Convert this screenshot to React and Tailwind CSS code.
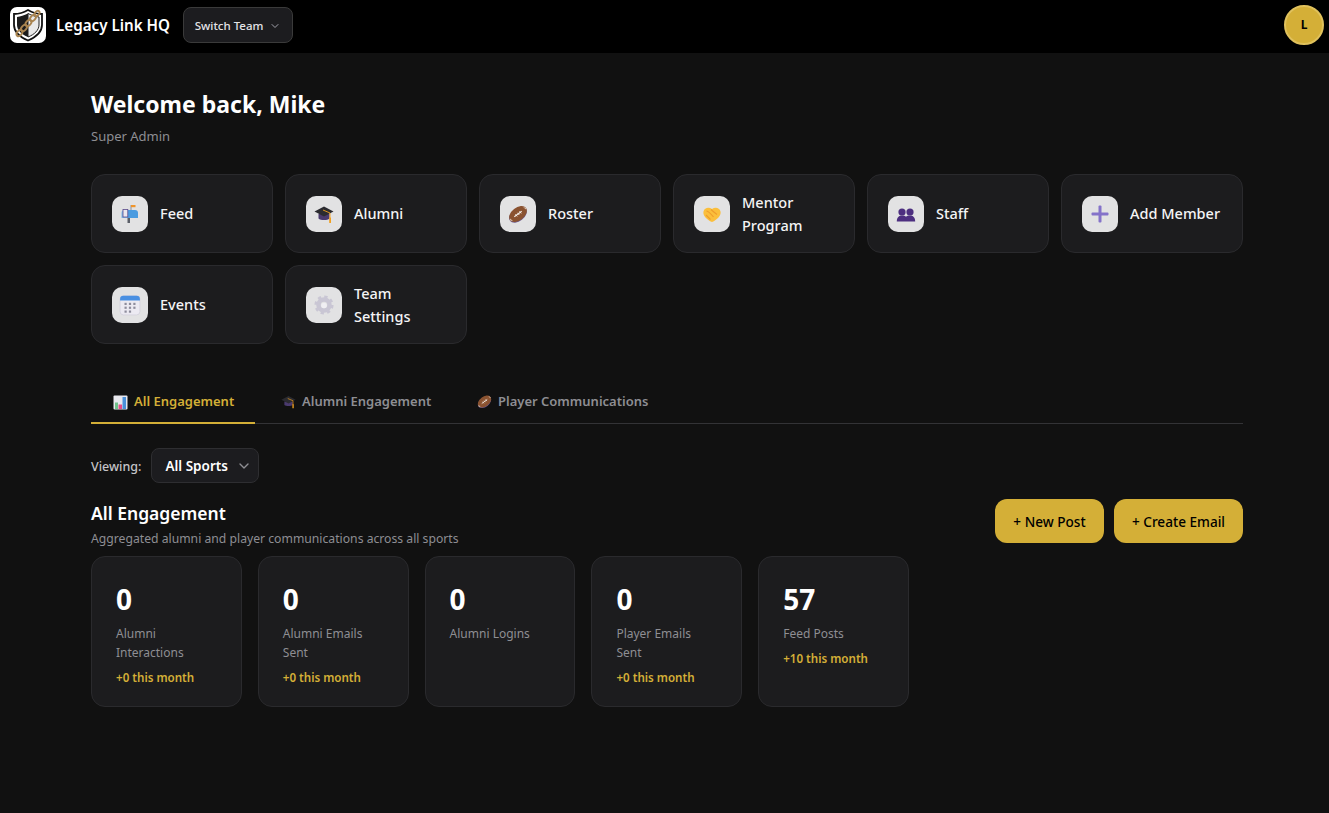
import React from 'react';
import { ChevronDown } from 'lucide-react';

const LogoMark = () => (
    <svg viewBox="0 0 36 36" className="w-9 h-9 shrink-0">
        <rect width="36" height="36" rx="7" fill="#fff" />
        <path d="M18 3 C13 6 8 7 4 7 L4 18 C4 25 10 30 18 33.500 C26 30 32 25 32 18 L32 7 C28 7 23 6 18 3 Z" fill="#fff" stroke="#111" strokeWidth="1.800" />
        <path d="M18 6.500 C14 8.500 10.500 9.500 7 10 L7 18 C7 23 11.500 27.500 18 30 Z" fill="#1c1c1c" />
        <path d="M18 6.500 C22 8.500 25.500 9.500 29 10 L29 18 C29 23 24.500 27.500 18 30 Z" fill="#e9e9e9" stroke="#222" strokeWidth="1" />
        <g fill="none" stroke="#a98450" strokeWidth="1.900">
            <ellipse cx="9.500" cy="26" rx="3.600" ry="2.300" transform="rotate(-48 9.500 26)" />
            <ellipse cx="14" cy="21" rx="3.600" ry="2.300" transform="rotate(-48 14 21)" />
            <ellipse cx="18.500" cy="16" rx="3.600" ry="2.300" transform="rotate(-48 18.500 16)" />
            <ellipse cx="23" cy="11" rx="3.600" ry="2.300" transform="rotate(-48 23 11)" />
            <ellipse cx="27" cy="6.500" rx="3" ry="2" transform="rotate(-48 27 6.500)" />
        </g>
    </svg>
);

const MailboxIcon = () => (
    <svg viewBox="0 0 20 20" className="w-5 h-5">
        <rect x="10.500" y="1" width="1" height="6" fill="#8a8f9c" />
        <rect x="11" y="1" width="4.500" height="2.200" fill="#f0952b" />
        <path d="M4 6 h11 a3 3 0 0 1 3 3 v5 h-14 z" fill="#4a9be0" />
        <path d="M1.500 9 a3 3 0 0 1 6 0 v5 h-6 z" fill="#7cb8ea" />
        <rect x="3" y="5.500" width="4.800" height="7.500" fill="#e9e6ef" stroke="#5a4a8a" strokeWidth="0.800" />
        <rect x="7.500" y="14" width="2.500" height="5" fill="#5b5f68" />
    </svg>
);

const CapIcon = ({ className = 'w-5 h-5' }) => (
    <svg viewBox="0 0 20 20" className={className}>
        <path d="M4.500 10 v4.500 c2 2 9 2 11 0 v-4.500 z" fill="#4a3a6e" />
        <path d="M10 2.500 L19.500 7.500 L10 12.500 L0.500 7.500 Z" fill="#2b2b30" />
        <path d="M9 6 L16 9 V15" fill="none" stroke="#f0a020" strokeWidth="0.900" />
        <rect x="15.200" y="13.500" width="1.800" height="5.500" rx="0.500" fill="#f0a020" />
    </svg>
);

const FootballIcon = ({ className = 'w-5 h-5' }) => (
    <svg viewBox="0 0 20 20" className={className}>
        <ellipse cx="10" cy="10.800" rx="10" ry="6.400" transform="rotate(-38 10 10.800)" fill="#6d5a8c" />
        <ellipse cx="10" cy="10" rx="10" ry="6.400" transform="rotate(-38 10 10)" fill="#8a5230" />
        <path d="M15 3 L17.800 3.900 L18 5.500 Z M2 14.500 L2.400 16.500 L5 17 Z" fill="#e8d8c8" />
        <path d="M6.300 12.800 L13.700 7.200" stroke="#f2ece6" strokeWidth="1.100" />
        <path d="M7.500 10.300 L9.200 12.400 M9.500 8.800 L11.200 10.900 M11.500 7.300 L13.200 9.400" stroke="#f2ece6" strokeWidth="1" />
    </svg>
);

const HandshakeIcon = () => (
    <svg viewBox="0 0 20 20" className="w-5 h-5">
        <path d="M1.500 7.500 C2.500 3.500 7 3 10 5 C13 3 17.500 3.500 18.500 7.500 C19.500 11.500 15 16 10 18 C5 16 0.500 11.500 1.500 7.500 Z" fill="#fbbf3c" />
        <path d="M4.500 7 C7 7.500 9 10 11.500 13 M9 5.500 C11 7.500 13 9 15 10.500 M4 11 L8.500 15.500" stroke="#ef9d2c" strokeWidth="1.100" fill="none" />
    </svg>
);

const StaffIcon = () => (
    <svg viewBox="0 0 20 20" className="w-5 h-5" fill="#4d2f80">
        <circle cx="6" cy="8" r="3.600" />
        <circle cx="14" cy="8" r="3.600" />
        <path d="M0.800 17.500 C0.800 13.200 3 11.500 6 11.500 C8 11.500 9.200 12 10 12.800 C10.800 12 12 11.500 14 11.500 C17 11.500 19.200 13.200 19.200 17.500 Z" />
    </svg>
);

const PlusIcon = () => (
    <svg viewBox="0 0 20 20" className="w-5 h-5" fill="#8472c9">
        <rect x="8.500" y="1.500" width="3" height="17" rx="1" />
        <rect x="1.500" y="8.500" width="17" height="3" rx="1" />
    </svg>
);

const CalendarIcon = () => (
    <svg viewBox="0 0 20 20" className="w-[22px] h-[22px]">
        <rect x="1" y="1.500" width="18" height="17.500" rx="3" fill="#eceaf2" stroke="#c8c6d4" strokeWidth="0.500" />
        <path d="M1 4.500 a3 3 0 0 1 3 -3 h12 a3 3 0 0 1 3 3 v1.500 h-18 z" fill="#4a90e2" />
        <g fill="#8d8c9c">
            <rect x="5" y="8" width="2" height="2" /><rect x="9" y="8" width="2" height="2" /><rect x="13" y="8" width="2" height="2" />
            <rect x="5" y="11.500" width="2" height="2" /><rect x="9" y="11.500" width="2" height="2" /><rect x="13" y="11.500" width="2" height="2" />
            <rect x="5" y="15" width="2" height="2" /><rect x="9" y="15" width="2" height="2" />
        </g>
    </svg>
);

const GearIcon = () => (
    <svg viewBox="0 0 20 20" className="w-5 h-5">
        <circle cx="10" cy="10" r="5.500" fill="none" stroke="#c9c6d4" strokeWidth="4.500" />
        <circle cx="10" cy="10" r="8.300" fill="none" stroke="#c9c6d4" strokeWidth="2.500" strokeDasharray="3.300 3.220" />
        <circle cx="10" cy="10.500" r="2.800" fill="#f0eff3" />
    </svg>
);

const ChartIcon = () => (
    <svg viewBox="0 0 15 15" className="w-[15px] h-[15px]">
        <rect x="0.500" y="0.500" width="14" height="14" rx="1" fill="#e8e8ee" />
        <rect x="2" y="7.500" width="3" height="6.500" fill="#6fc18b" />
        <rect x="5.500" y="9.500" width="3.500" height="4.500" fill="#e84c88" />
        <rect x="9.500" y="2" width="3.500" height="12" fill="#4a90d9" />
    </svg>
);

const actions = [
    { label: 'Feed', icon: <MailboxIcon /> },
    { label: 'Alumni', icon: <CapIcon /> },
    { label: 'Roster', icon: <FootballIcon /> },
    { label: 'Mentor Program', icon: <HandshakeIcon /> },
    { label: 'Staff', icon: <StaffIcon /> },
    { label: 'Add Member', icon: <PlusIcon /> },
    { label: 'Events', icon: <CalendarIcon /> },
    { label: 'Team Settings', icon: <GearIcon /> },
];

const stats = [
    { value: '0', label: 'Alumni Interactions', change: '+0 this month' },
    { value: '0', label: 'Alumni Emails Sent', change: '+0 this month' },
    { value: '0', label: 'Alumni Logins' },
    { value: '0', label: 'Player Emails Sent', change: '+0 this month' },
    { value: '57', label: 'Feed Posts', change: '+10 this month' },
];

const App = () => {
    return (
        <div className="min-h-[813px] bg-[#111111] text-white font-['Noto_Sans',sans-serif]">
            {/* Top bar */}
            <header className="h-[53px] bg-black flex items-center justify-between pl-[10px] pr-[5px] pb-[3px]">
                <div className="flex items-center">
                    <LogoMark />
                    <span className="ml-[10px] pt-[1px] text-[15.200px] font-semibold">Legacy Link HQ</span>
                    <button className="ml-[13px] h-9 w-[110px] flex items-center justify-center gap-[6px] rounded-lg bg-[#1c1c1f] border border-[#3a3a3a] pt-[1px] text-[11.500px] font-medium text-[#e4e4e7]">
                        Switch Team
                        <ChevronDown size={12} className="text-[#a1a1aa]" />
                    </button>
                </div>
                <div className="w-10 h-10 rounded-full bg-[#d4af37] border-2 border-[#e0c15c] flex items-center justify-center text-[12px] font-bold text-black">
                    L
                </div>
            </header>

            <main className="w-[1152px] ml-[91px]">
                <h1 className="mt-[35px] text-[23px] leading-[32px] font-bold">Welcome back, Mike</h1>
                <p className="mt-[7px] text-[13px] leading-[18px] text-[#8e8e93]">Super Admin</p>

                {/* Quick actions */}
                <div className="mt-[29px] grid grid-cols-6 gap-3">
                    {actions.map(a => (
                        <div key={a.label} className="h-[79px] rounded-[14px] bg-[#1c1c1e] border border-[#2a2a2d] flex items-center pl-5 pr-3 gap-3">
                            <div className="w-9 h-9 shrink-0 rounded-[10px] bg-[#e2e2e3] flex items-center justify-center">
                                {a.icon}
                            </div>
                            <span className="max-w-[94px] text-[14.500px] leading-[23px] font-medium text-[#f4f4f5]">{a.label}</span>
                        </div>
                    ))}
                </div>

                {/* Tabs */}
                <div className="mt-[31px] flex border-b border-[#333336] h-[49px] text-[13px] font-semibold text-[#8e8e93]">
                    <div className="w-[164px] h-[49px] border-b-2 border-[#d4af37] flex items-center gap-[6px] pl-[22px] pt-[7px] text-[#d4af37]">
                        <ChartIcon /> All Engagement
                    </div>
                    <div className="w-[196px] flex items-center gap-[6px] pl-[26px] pt-[5px]">
                        <CapIcon className="w-[15px] h-[15px]" /> Alumni Engagement
                    </div>
                    <div className="flex items-center gap-[6px] pl-[26px] pt-[5px]">
                        <FootballIcon className="w-[15px] h-[15px]" /> Player Communications
                    </div>
                </div>

                {/* Sport filter */}
                <div className="mt-[24px] flex items-center gap-[10px]">
                    <span className="pt-[3px] text-[12.500px] font-medium text-[#c4c4c8]">Viewing:</span>
                    <div className="w-[108px] h-[35px] rounded-lg bg-[#1c1c1f] border border-[#2e2e31] flex items-center pl-[13px] gap-2 pt-[1px] text-[13.500px] font-semibold">
                        All Sports
                        <ChevronDown size={16} className="text-[#8e8e93]" />
                    </div>
                </div>

                <div className="mt-[16px] flex justify-between items-start">
                    <div className="pt-[1px]">
                        <h2 className="text-[17.500px] leading-[26px] font-semibold">All Engagement</h2>
                        <p className="mt-[4px] text-[12.200px] leading-[18px] text-[#8e8e93]">Aggregated alumni and player communications across all sports</p>
                    </div>
                    <div className="flex gap-[10px]">
                        <button className="w-[109px] h-[44px] pt-[2px] rounded-xl bg-[#d4af37] text-[13.600px] font-medium text-black">+ New Post</button>
                        <button className="w-[129px] h-[44px] pt-[2px] rounded-xl bg-[#d4af37] text-[13.600px] font-medium text-black">+ Create Email</button>
                    </div>
                </div>

                {/* Stat cards */}
                <div className="mt-[8px] w-[818px] grid grid-cols-5 gap-4">
                    {stats.map(s => (
                        <div key={s.label} className="h-[151px] rounded-[14px] bg-[#1c1c1e] border border-[#2a2a2d] px-6 pt-6">
                            <div className="text-[28px] leading-[36px] font-bold">{s.value}</div>
                            <div className="mt-[7px] text-[12px] leading-[19px] text-[#8e8e93]">{s.label}</div>
                            {s.change && <div className="mt-[8px] text-[11.600px] leading-[16px] font-semibold text-[#d4af37]">{s.change}</div>}
                        </div>
                    ))}
                </div>
            </main>
        </div>
    );
};

export default App;
